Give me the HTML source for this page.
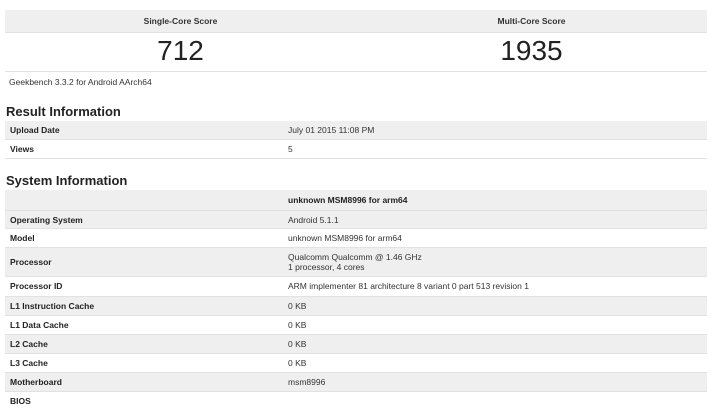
<!DOCTYPE html>
<html><head><style>
body{margin:0;width:712px;height:400px;overflow:hidden;background:#fff;font-family:"Liberation Sans",Arial,sans-serif;color:#333;position:relative}
.a{position:absolute}
.g{background:#efefef}
.row{position:absolute;left:5px;width:702px;border-bottom:1px solid #e2e2e2;font-size:8.5px}
.row .k{position:absolute;left:5px;font-weight:bold;color:#222}
.row .v{position:absolute;left:283px;color:#333}
h2{position:absolute;left:6px;margin:0;font-size:13px;font-weight:bold;color:#222}
</style></head><body>
<div class="a g" style="left:5px;top:10px;width:702px;height:22px;border-bottom:1px solid #e2e2e2"></div>
<div class="a" style="left:5px;top:16px;width:351px;text-align:center;font-size:8.5px;font-weight:bold">Single-Core Score</div>
<div class="a" style="left:356px;top:16px;width:351px;text-align:center;font-size:8.5px;font-weight:bold">Multi-Core Score</div>
<div class="a" style="left:5px;top:35px;width:351px;text-align:center;font-size:28px;color:#222">712</div>
<div class="a" style="left:356px;top:35px;width:351px;text-align:center;font-size:28px;color:#222">1935</div>
<div class="a" style="left:5px;top:71px;width:702px;border-top:1px solid #e2e2e2"></div>
<div class="a" style="left:9px;top:77px;font-size:8.5px">Geekbench 3.3.2 for Android AArch64</div>
<h2 style="top:104px">Result Information</h2>
<div class="row g" style="top:121px;height:18px"><span class="k" style="top:4px">Upload Date</span><span class="v" style="top:4px">July 01 2015 11:08 PM</span></div>
<div class="row" style="top:140px;height:18px"><span class="k" style="top:4px">Views</span><span class="v" style="top:4px">5</span></div>
<h2 style="top:173px">System Information</h2>
<div class="row g" style="top:190px;height:20px"><span class="v" style="top:5px;font-weight:bold;color:#222">unknown MSM8996 for arm64</span></div>
<div class="row g" style="top:211px;height:17px"><span class="k" style="top:4px">Operating System</span><span class="v" style="top:4px">Android 5.1.1</span></div>
<div class="row" style="top:229px;height:18px"><span class="k" style="top:4px">Model</span><span class="v" style="top:4px">unknown MSM8996 for arm64</span></div>
<div class="row g" style="top:248px;height:28px"><span class="k" style="top:9px">Processor</span><span class="v" style="top:4px;line-height:10px">Qualcomm Qualcomm @ 1.46 GHz<br>1 processor, 4 cores</span></div>
<div class="row" style="top:277px;height:19px"><span class="k" style="top:4px">Processor ID</span><span class="v" style="top:4px">ARM implementer 81 architecture 8 variant 0 part 513 revision 1</span></div>
<div class="row g" style="top:297px;height:18px"><span class="k" style="top:4px">L1 Instruction Cache</span><span class="v" style="top:4px">0 KB</span></div>
<div class="row" style="top:316px;height:18px"><span class="k" style="top:4px">L1 Data Cache</span><span class="v" style="top:4px">0 KB</span></div>
<div class="row g" style="top:335px;height:18px"><span class="k" style="top:4px">L2 Cache</span><span class="v" style="top:4px">0 KB</span></div>
<div class="row" style="top:354px;height:18px"><span class="k" style="top:4px">L3 Cache</span><span class="v" style="top:4px">0 KB</span></div>
<div class="row g" style="top:373px;height:18px"><span class="k" style="top:4px">Motherboard</span><span class="v" style="top:4px">msm8996</span></div>
<div class="row" style="top:392px;height:18px;border:none"><span class="k" style="top:4px">BIOS</span></div>
</body></html>
